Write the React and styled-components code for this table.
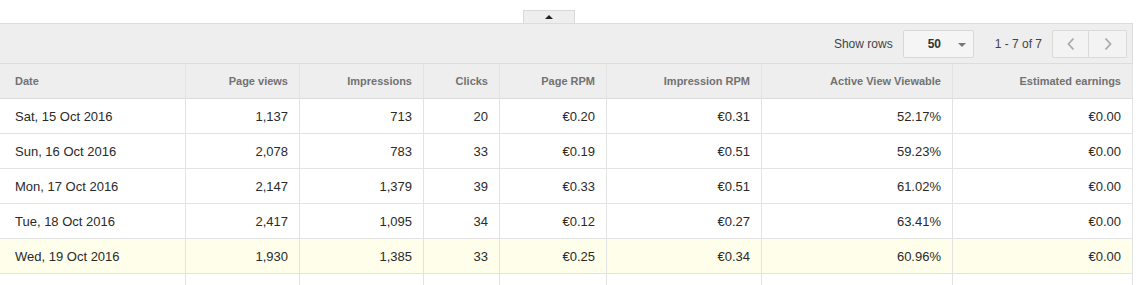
import React from "react";
import styled, { createGlobalStyle } from "styled-components";

const Global = createGlobalStyle`
  html, body { margin: 0; padding: 0; background: #fff; }
  body { font-family: "Liberation Sans", Arial, sans-serif; color: #222; }
`;

const Page = styled.div`
  width: 1133px;
`;

const TabRow = styled.div`
  height: 23px;
  display: flex;
  align-items: flex-end;
  padding-left: 523px;
`;

const Tab = styled.button`
  width: 52px;
  height: 13px;
  box-sizing: border-box;
  border: 1px solid #d9d9d9;
  border-bottom: none;
  background: #eeeeee;
  padding: 0;
  margin: 0;
  display: flex;
  justify-content: center;
  align-items: flex-start;
  padding-top: 4px;
  cursor: pointer;
`;

const UpTriangle = styled.span`
  width: 0;
  height: 0;
  border-left: 4px solid transparent;
  border-right: 4px solid transparent;
  border-bottom: 4px solid #222;
`;

const Toolbar = styled.div`
  height: 41px;
  box-sizing: border-box;
  background: #eeeeee;
  border-top: 1px solid #dcdcdc;
  border-bottom: 1px solid #dcdcdc;
  border-right: 1px solid #dcdcdc;
  display: flex;
  align-items: center;
  justify-content: flex-end;
  padding-right: 5px;
  font-size: 12px;
  color: #444;
`;

const Label = styled.span`
  margin-right: ${(p) => p.$gap || 0}px;
`;

const Select = styled.div`
  width: 71px;
  height: 28px;
  box-sizing: border-box;
  border: 1px solid #d8d8d8;
  border-radius: 2px;
  background: #f5f5f5;
  display: flex;
  align-items: center;
  padding-left: 24px;
  padding-right: 7px;
  margin-right: 21px;
  font-weight: bold;
  color: #333;
`;

const SelectValue = styled.span`
  flex: 1;
`;

const DownTriangle = styled.span`
  width: 0;
  height: 0;
  border-left: 4px solid transparent;
  border-right: 4px solid transparent;
  border-top: 4px solid #777;
  margin-top: 2px;
`;

const Pager = styled.div`
  display: flex;
  margin-left: 10px;
`;

const PageButton = styled.button`
  width: ${(p) => (p.$first ? 37 : 38)}px;
  height: 28px;
  box-sizing: border-box;
  border: 1px solid #dadada;
  border-left: ${(p) => (p.$first ? "1px solid #dadada" : "none")};
  border-radius: ${(p) => (p.$first ? "2px 0 0 2px" : "0 2px 2px 0")};
  background: #f3f3f3;
  padding: 0;
  display: flex;
  align-items: center;
  justify-content: center;
  cursor: default;
`;

const Grid = styled.div`
  display: grid;
  grid-template-columns: 186px 114px 124px 76px 107px 155px 191px 180px;
`;

const Cell = styled.div`
  height: 35px;
  box-sizing: border-box;
  border-right: 1px solid #e3e3e3;
  border-bottom: 1px solid ${(p) => (p.$head ? "#dcdcdc" : "#e3e3e3")};
  display: flex;
  align-items: center;
  justify-content: ${(p) => (p.$left ? "flex-start" : "flex-end")};
  padding: ${(p) => (p.$left ? "0 11px 0 15px" : "0 11px 0 8px")};
  white-space: nowrap;
  background: ${(p) => (p.$head ? "#eeeeee" : p.$hl ? "#fefeeb" : "#fff")};
  font-size: ${(p) => (p.$head ? "11px" : "13px")};
  font-weight: ${(p) => (p.$head ? "bold" : "normal")};
  color: ${(p) => (p.$head ? "#727272" : "#2a2a2a")};
`;

const headers = [
  "Date",
  "Page views",
  "Impressions",
  "Clicks",
  "Page RPM",
  "Impression RPM",
  "Active View Viewable",
  "Estimated earnings",
];

const rows = [
  ["Sat, 15 Oct 2016", "1,137", "713", "20", "€0.20", "€0.31", "52.17%", "€0.00"],
  ["Sun, 16 Oct 2016", "2,078", "783", "33", "€0.19", "€0.51", "59.23%", "€0.00"],
  ["Mon, 17 Oct 2016", "2,147", "1,379", "39", "€0.33", "€0.51", "61.02%", "€0.00"],
  ["Tue, 18 Oct 2016", "2,417", "1,095", "34", "€0.12", "€0.27", "63.41%", "€0.00"],
  ["Wed, 19 Oct 2016", "1,930", "1,385", "33", "€0.25", "€0.34", "60.96%", "€0.00"],
  ["", "", "", "", "", "", "", ""],
];

const Chevron = ({ dir }) => (
  <svg width="10" height="14" viewBox="0 0 10 14">
    <path
      d={dir === "left" ? "M7.5 1.5 L2.5 7 L7.5 12.5" : "M2.5 1.5 L7.5 7 L2.5 12.5"}
      fill="none"
      stroke="#aaa"
      strokeWidth="1.8"
    />
  </svg>
);

export default function App() {
  return (
    <Page>
      <Global />
      <TabRow>
        <Tab aria-label="Collapse">
          <UpTriangle />
        </Tab>
      </TabRow>
      <Toolbar>
        <Label $gap={10}>Show rows</Label>
        <Select>
          <SelectValue>50</SelectValue>
          <DownTriangle />
        </Select>
        <Label>1 - 7 of 7</Label>
        <Pager>
          <PageButton $first>
            <Chevron dir="left" />
          </PageButton>
          <PageButton>
            <Chevron dir="right" />
          </PageButton>
        </Pager>
      </Toolbar>
      <Grid>
        {headers.map((h, i) => (
          <Cell key={h} $head $left={i === 0}>
            {h}
          </Cell>
        ))}
        {rows.map((r, ri) =>
          r.map((v, ci) => (
            <Cell key={ri + "-" + ci} $left={ci === 0} $hl={ri === 4}>
              {v}
            </Cell>
          ))
        )}
      </Grid>
    </Page>
  );
}
